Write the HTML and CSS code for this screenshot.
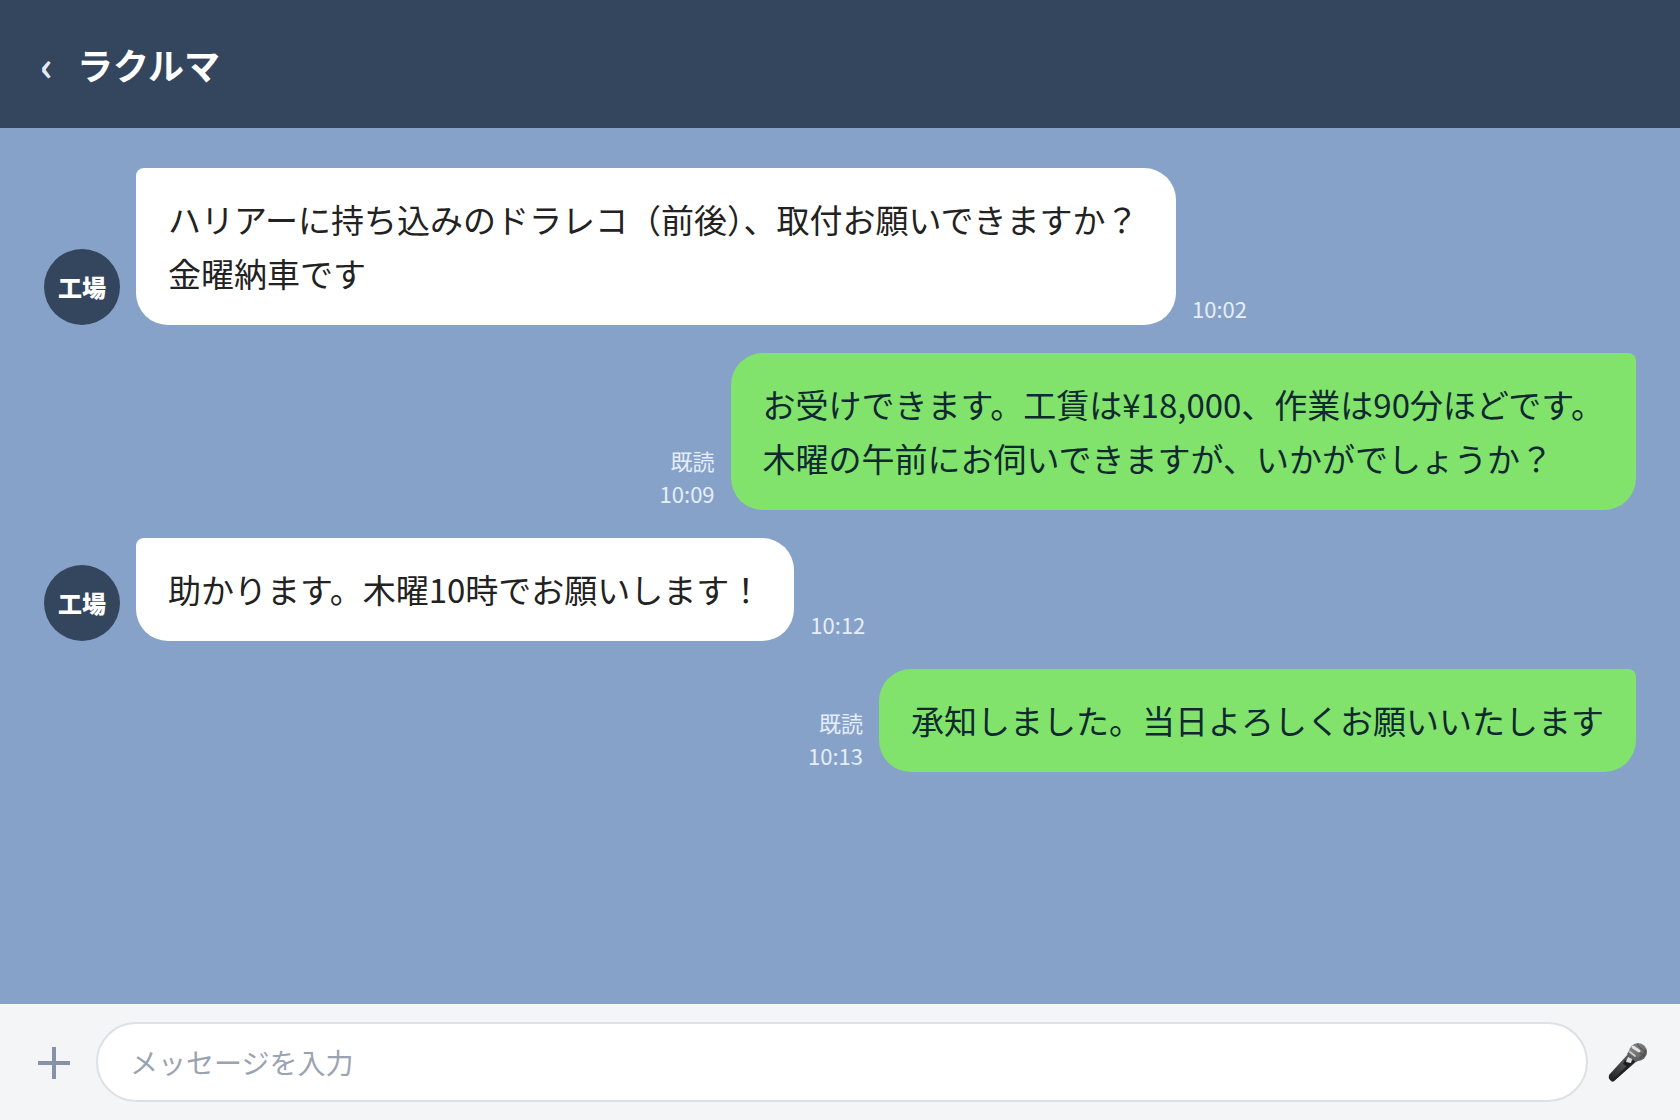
FILE: index.html
```
<!DOCTYPE html>
<html lang="ja">
<head>
<meta charset="utf-8">
<meta name="viewport" content="width=device-width, initial-scale=1">
<title>ラクルマ</title>
<link rel="stylesheet" href="styles.css">
</head>
<body>

<header class="head">
  <button type="button" class="back" aria-label="戻る">‹</button>
  <h1>ラクルマ</h1>
</header>

<main class="talk">
  <div class="row">
    <span class="avatar">工場</span>
    <p class="bubble">ハリアーに持ち込みのドラレコ（前後）、取付お願いできますか？金曜納車です</p>
    <div class="meta">10:02</div>
  </div>
  <div class="row mine">
    <div class="meta">既読<br>10:09</div>
    <p class="bubble">お受けできます。工賃は¥18,000、作業は90分ほどです。<br>木曜の午前にお伺いできますが、いかがでしょうか？</p>
  </div>
  <div class="row">
    <span class="avatar">工場</span>
    <p class="bubble">助かります。木曜10時でお願いします！</p>
    <div class="meta">10:12</div>
  </div>
  <div class="row mine">
    <div class="meta">既読<br>10:13</div>
    <p class="bubble">承知しました。当日よろしくお願いいたします</p>
  </div>
</main>

<form class="compose">
  <button type="button" class="add" aria-label="追加">
    <svg width="34" height="34" viewBox="0 0 34 34"><path d="M17 1v32M1 17h32" stroke="#8792a8" stroke-width="4"/></svg>
  </button>
  <input type="text" aria-label="メッセージ" placeholder="メッセージを入力">
  <button type="button" class="mic" aria-label="音声入力">
    <svg width="44" height="44" viewBox="0 0 44 44">
      <defs>
        <linearGradient id="body" x1="1" y1="0" x2="0" y2="1">
          <stop offset="0" stop-color="#6a6a6a"/>
          <stop offset=".5" stop-color="#484848"/>
          <stop offset="1" stop-color="#1c1c1c"/>
        </linearGradient>
        <linearGradient id="ball" x1="0" y1="0" x2="1" y2="1">
          <stop offset="0" stop-color="#8c8c8c"/>
          <stop offset="1" stop-color="#5a5a5a"/>
        </linearGradient>
      </defs>
      <path d="M22 14 3 35q-1 3 1 5t4 1L31 21z" fill="url(#body)"/>
      <path d="M5 41q2 1 3 0l22-20-3-1z" fill="#222"/>
      <circle cx="32" cy="12" r="9" fill="url(#ball)"/>
      <path d="M27 6q5 8 12 10M31 4q4 6 9 8M30 20q7-3 10-10M34 19q4-2 6-6" stroke="#4c4c4c" fill="none"/>
      <path d="m23 11 11 9-4 2-9-8z" fill="#626262"/>
      <path d="m27 7 6 4" stroke="#e4e4e4" stroke-width="3" stroke-linecap="round"/>
      <path d="m24 12 5 4" stroke="#ccc" stroke-width="2" stroke-linecap="round"/>
      <path d="m19 20 5 3-2 4-5-3z" fill="#1c1c1c"/>
      <path d="m22 17 4 2-1 4-5-1z" fill="#ddd"/>
    </svg>
  </button>
</form>

</body>
</html>
```
FILE: styles.css
```
* {
  box-sizing: border-box;
}

body {
  margin: 0;
  min-height: 100vh;
  display: flex;
  flex-direction: column;
  background: #87a2c8;
  font-family: "Noto Sans CJK JP", sans-serif;
}

button {
  padding: 0;
  border: 0;
  background: none;
  font: inherit;
  color: inherit;
}

svg {
  display: block;
}

/* header */
.head {
  display: flex;
  align-items: center;
  gap: 24px;
  padding: 36px 40px;
  background: #34465e;
  color: #fff;
}

.back {
  font-size: 40px;
  line-height: 56px;
  font-weight: 700;
  color: #e3eaf6;
}

.head h1 {
  margin: 0;
  font-size: 36px;
  line-height: 56px;
  font-weight: 700;
}

/* messages */
.talk {
  flex: 1;
  display: flex;
  flex-direction: column;
  gap: 28px;
  padding: 40px 44px;
}

.row {
  display: flex;
  align-items: flex-end;
  gap: 16px;
}

.mine {
  justify-content: flex-end;
}

.avatar {
  flex: none;
  width: 76px;
  height: 76px;
  border-radius: 50%;
  background: #34465e;
  color: #fff;
  font-size: 24px;
  line-height: 76px;
  font-weight: 900;
  text-align: center;
}

.bubble {
  max-width: 1040px;
  margin: 0;
  padding: 24px 32px 25px;
  border-radius: 8px 32px 32px 32px;
  background: #fff;
  color: #222;
  font-size: 33px;
  line-height: 54px;
}

.mine .bubble {
  border-radius: 32px 8px 32px 32px;
  background: #81e36c;
  color: #10282f;
}

.meta {
  flex: none;
  color: #e6eefb;
  font-size: 22px;
  line-height: 33px;
}

.mine .meta {
  text-align: right;
}

/* input bar */
.compose {
  display: flex;
  align-items: center;
  gap: 18px;
  padding: 18px 30px 18px 28px;
  background: #f3f5f7;
}

.add {
  padding: 2px 7px 0 9px;
}

.compose input {
  flex: 1;
  min-width: 0;
  height: 80px;
  padding: 0 32px;
  border: 2px solid #dce0e7;
  border-radius: 40px;
  background: #fff;
  font: 28px "Noto Sans CJK JP", sans-serif;
}

.compose input::placeholder {
  color: #9aa3b2;
  opacity: 1;
}
```
